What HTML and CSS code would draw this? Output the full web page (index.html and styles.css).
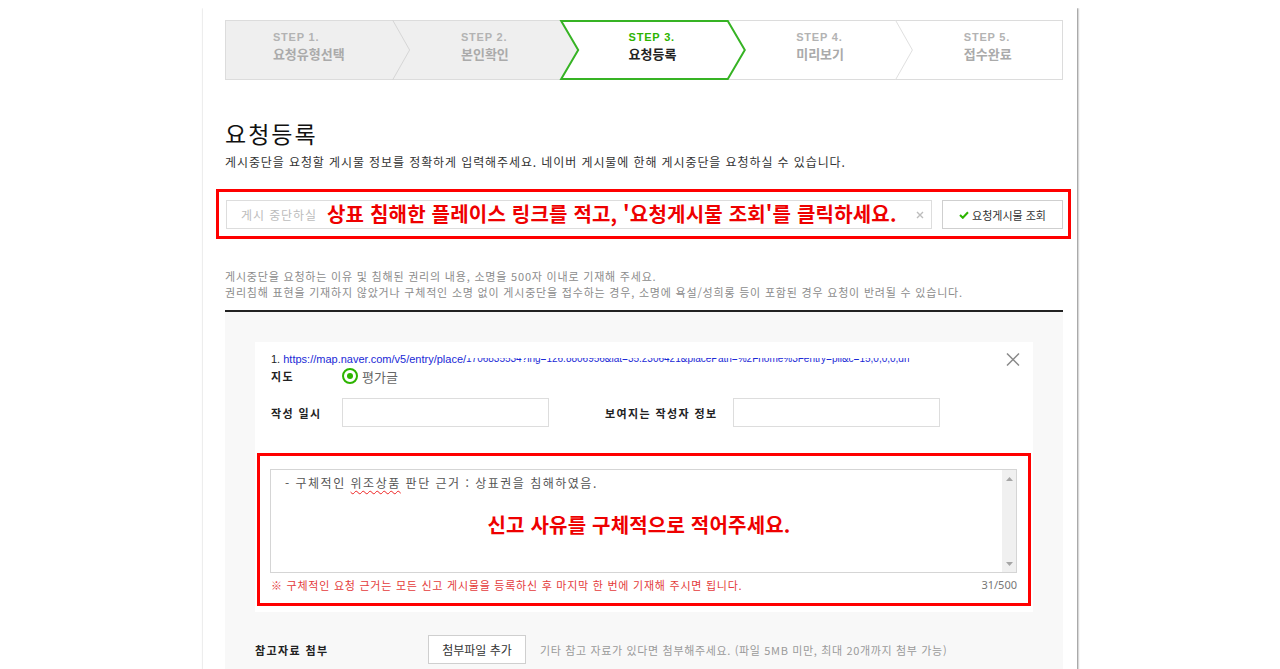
FILE: index.html
```html
<!DOCTYPE html>
<html lang="ko">
<head>
<meta charset="utf-8">
<title>게시중단 요청 - 요청등록</title>
<link rel="stylesheet" href="styles.css">
</head>
<body>
<div class="panel">
  <div class="steps">
    <svg class="steps-bg" viewBox="0 0 838 60" preserveAspectRatio="none" aria-hidden="true">
      <path d="M0 0 H335.2 L352.2 30 L335.2 60 H0 Z" fill="#efefef"/>
      <rect x="0.5" y="0.5" width="837" height="59" fill="none" stroke="#dcdcdc"/>
      <path d="M167.6 0 L184.6 30 L167.6 60" fill="none" stroke="#d6d6d6"/>
      <path d="M670.4 0 L687.4 30 L670.4 60" fill="none" stroke="#e0e0e0"/>
      <path d="M336.2 1 H502.8 L519.8 30 L502.8 59 H336.2 L353.2 30 Z" fill="#fff" stroke="#36b324" stroke-width="2"/>
    </svg>
    <div class="step step-1"><div class="step-text"><span class="step-no">STEP 1.</span><span class="step-name">요청유형선택</span></div></div>
    <div class="step step-2"><div class="step-text"><span class="step-no">STEP 2.</span><span class="step-name">본인확인</span></div></div>
    <div class="step step-3 is-current"><div class="step-text"><span class="step-no">STEP 3.</span><span class="step-name">요청등록</span></div></div>
    <div class="step step-4"><div class="step-text"><span class="step-no">STEP 4.</span><span class="step-name">미리보기</span></div></div>
    <div class="step step-5"><div class="step-text"><span class="step-no">STEP 5.</span><span class="step-name">접수완료</span></div></div>
  </div>

  <h2 class="title">요청등록</h2>
  <p class="desc">게시중단을 요청할 게시물 정보를 정확하게 입력해주세요. 네이버 게시물에 한해 게시중단을 요청하실 수 있습니다.</p>

  <div class="mark mark-search">
    <div class="search">
      <div class="search-input">
        <span class="ph">게시 중단하실</span>
        <svg class="clear" width="8" height="8" viewBox="0 0 8 8" aria-hidden="true"><path d="M1 1 L7 7 M7 1 L1 7" stroke="#bdbdbd" stroke-width="1.4"/></svg>
      </div>
      <button class="search-btn" type="button">
        <svg width="10" height="8" viewBox="0 0 10 8" aria-hidden="true"><path d="M1 4 L3.8 6.8 L9 1.2" fill="none" stroke="#2db400" stroke-width="2"/></svg>
        <span>요청게시물 조회</span>
      </button>
    </div>
    <p class="mark-note note-search">상표 침해한 플레이스 링크를 적고, '요청게시물 조회'를 클릭하세요.</p>
  </div>

  <div class="notice">
    <p>게시중단을 요청하는 이유 및 침해된 권리의 내용, 소명을 500자 이내로 기재해 주세요.</p>
    <p>권리침해 표현을 기재하지 않았거나 구체적인 소명 없이 게시중단을 접수하는 경우, 소명에 욕설/성희롱 등이 포함된 경우 요청이 반려될 수 있습니다.</p>
  </div>

  <div class="form-area">
    <div class="card">
      <div class="url-row">
        <p class="url"><span class="url-no">1.</span> <span class="url-link">https://map.naver.com/v5/entry/place/</span><span class="url-cut">1706835534?lng=126.8806956&amp;lat=35.2306421&amp;placePath=%2Fhome%3Fentry=pll&amp;c=15,0,0,0,dh</span></p>
        <svg class="close" width="14" height="13" viewBox="0 0 14 13" aria-hidden="true"><path d="M1 0.5 L13 12.5 M13 0.5 L1 12.5" stroke="#8a8a8a" stroke-width="1.5"/></svg>
      </div>
      <div class="type-row">
        <span class="lbl">지도</span>
        <span class="radio"></span>
        <span class="radio-text">평가글</span>
      </div>
      <div class="info-row">
        <span class="lbl">작성 일시</span>
        <span class="field"></span>
        <span class="lbl lbl-wide">보여지는 작성자 정보</span>
        <span class="field"></span>
      </div>
      <div class="mark mark-reason">
        <div class="textarea">
          <p class="textarea-text">- 구체적인 <span class="typo">위조상품</span> 판단 근거 : 상표권을 침해하였음.</p>
          <div class="scrollbar">
            <svg width="7" height="4" viewBox="0 0 7 4" aria-hidden="true"><path d="M0 4 L3.5 0 L7 4 Z" fill="#a6a6a6"/></svg>
            <svg width="7" height="4" viewBox="0 0 7 4" aria-hidden="true"><path d="M0 0 L3.5 4 L7 0 Z" fill="#a6a6a6"/></svg>
          </div>
        </div>
        <div class="under">
          <span class="warn">※ 구체적인 요청 근거는 모든 신고 게시물을 등록하신 후 마지막 한 번에 기재해 주시면 됩니다.</span>
          <span class="count">31/500</span>
        </div>
        <p class="mark-note note-reason">신고 사유를 구체적으로 적어주세요.</p>
      </div>
    </div>

    <div class="attach-row">
      <span class="lbl attach-lbl">참고자료 첨부</span>
      <button class="attach-btn" type="button">첨부파일 추가</button>
      <span class="attach-help">기타 참고 자료가 있다면 첨부해주세요. (파일 5MB 미만, 최대 20개까지 첨부 가능)</span>
    </div>
  </div>
</div>
</body>
</html>
```

FILE: styles.css
```css
* {
  box-sizing: border-box;
}

body {
  margin: 8px;
  background: #fff;
  font-family: "Noto Sans CJK KR", "Noto Sans", sans-serif;
  color: #222;
}

p {
  margin: 0;
}

/* page sheet */
.panel {
  width: 874px;
  margin: 0 auto;
  padding: 12px 14px 60px 22px;
  background: #fff;
  box-shadow: 1px 0 2px rgba(0, 0, 0, 0.45), 0 0 2px rgba(0, 0, 0, 0.12);
}

/* step indicator */
.steps {
  display: grid;
  grid-template-columns: repeat(5, 1fr);
  height: 60px;
}

.steps-bg {
  grid-row: 1;
  grid-column: 1 / -1;
  display: block;
  width: 100%;
  height: 60px;
}

.step {
  grid-row: 1;
  display: flex;
  align-items: center;
  justify-content: center;
  padding-bottom: 7px;
}

.step-1 { grid-column: 1; }
.step-2 { grid-column: 2; padding-left: 17px; }
.step-3 { grid-column: 3; padding-left: 17px; }
.step-4 { grid-column: 4; padding-left: 17px; }
.step-5 { grid-column: 5; padding-left: 17px; }

.step-text {
  display: flex;
  flex-direction: column;
}

.step-no {
  font-family: "Liberation Sans", Arial, sans-serif;
  font-weight: 700;
  font-size: 11px;
  line-height: 13px;
  letter-spacing: 0.8px;
  color: #b3b3b3;
}

.step-name {
  font-weight: 700;
  font-size: 13px;
  line-height: 19px;
  color: #aaa;
}

.is-current .step-no {
  color: #2db400;
}

.is-current .step-name {
  color: #222;
}

/* heading */
.title {
  margin: 38px 0 0;
  font-size: 23px;
  font-weight: 400;
  line-height: 30px;
  letter-spacing: 2px;
  color: #111;
}

.desc {
  margin-top: 6px;
  font-size: 12px;
  line-height: 16px;
  letter-spacing: 0.9px;
  color: #333;
}

/* red callout boxes */
.mark {
  position: relative;
  border: 3px solid #f00;
}

.mark-note {
  position: absolute;
  font-weight: 700;
  font-size: 20px;
  line-height: 24px;
  letter-spacing: 0.2px;
  color: #ee0000;
  white-space: nowrap;
}

.mark-search {
  margin: 19px -8px 0 -9px;
  padding: 8px 5px 7px 7px;
}

.note-search {
  left: 108px;
  top: 10px;
}

.search {
  display: flex;
  gap: 10px;
}

.search-input {
  width: 706px;
  height: 29px;
  border: 1px solid #ddd;
  display: flex;
  align-items: center;
  justify-content: space-between;
  padding: 0 7px 0 14px;
  background: #fff;
}

.ph {
  font-size: 12px;
  letter-spacing: 0.9px;
  color: #bcbcbc;
}

.search-btn {
  width: 121px;
  height: 29px;
  border: 1px solid #cfcfcf;
  background: #fff;
  display: flex;
  align-items: center;
  justify-content: center;
  gap: 3px;
  padding: 0;
  font-family: inherit;
  font-size: 11px;
  color: #333;
}

/* guide text */
.notice {
  margin-top: 29px;
  font-size: 11px;
  line-height: 16px;
  letter-spacing: 0.8px;
  color: #8c8c8c;
}

/* form */
.form-area {
  margin-top: 10px;
  border-top: 2px solid #222;
  background: #f8f8f8;
  padding: 30px 30px 40px;
}

.card {
  background: #fff;
  padding: 10px 2px 6px;
}

.url-row {
  display: flex;
  align-items: center;
  justify-content: space-between;
  height: 14px;
  padding: 0 11px 0 14px;
}

.url {
  font-family: "Liberation Sans", Arial, sans-serif;
  font-size: 11px;
  line-height: 14px;
  white-space: nowrap;
  color: #222;
}

.url-link {
  color: #1a29d6;
}

.url-cut {
  display: inline-block;
  vertical-align: top;
  font-size: 10px;
  line-height: 14px;
  color: #1a29d6;
  clip-path: inset(6px 0 0 0);
}

.close {
  display: block;
}

.lbl {
  font-weight: 700;
  font-size: 11px;
  letter-spacing: 1.4px;
  color: #222;
  flex: none;
}

.type-row {
  display: flex;
  align-items: center;
  height: 16px;
  margin-top: 2px;
  padding-left: 14px;
}

.type-row .lbl,
.info-row .lbl {
  width: 71px;
}

.radio {
  width: 16px;
  height: 16px;
  border: 2px solid #2db400;
  border-radius: 50%;
  display: flex;
  align-items: center;
  justify-content: center;
}

.radio::after {
  content: "";
  width: 6px;
  height: 6px;
  border-radius: 50%;
  background: #2db400;
}

.radio-text {
  margin-left: 4px;
  font-size: 13px;
  color: #666;
}

.info-row {
  display: flex;
  align-items: center;
  margin-top: 14px;
  padding-left: 14px;
}

.field {
  width: 207px;
  height: 29px;
  border: 1px solid #ddd;
  background: #fff;
}

.info-row .lbl-wide {
  width: 128px;
  margin-left: 56px;
}

.mark-reason {
  margin-top: 26px;
  padding: 13px 11px 10px 10px;
}

.textarea {
  height: 104px;
  border: 1px solid #d5d5d5;
  display: flex;
  justify-content: space-between;
  background: #fff;
}

.textarea-text {
  padding: 4px 14px;
  font-size: 12px;
  line-height: 18px;
  letter-spacing: 1.5px;
  color: #555;
}

.typo {
  text-decoration: underline wavy #e22;
  text-decoration-thickness: 1px;
  text-underline-offset: 2px;
}

.scrollbar {
  width: 14px;
  background: #f0f0f0;
  display: flex;
  flex-direction: column;
  align-items: center;
  justify-content: space-between;
  padding: 7px 0 6px;
}

.scrollbar svg {
  display: block;
}

.under {
  display: flex;
  justify-content: space-between;
  margin-top: 4px;
  padding: 0 0 0 1px;
  font-size: 11px;
  line-height: 16px;
}

.warn {
  color: #e43b3b;
  letter-spacing: 0.75px;
}

.count {
  color: #777;
  font-family: "Noto Sans", sans-serif;
}

.note-reason {
  left: 0;
  right: 0;
  top: 57px;
  padding-right: 10px;
  text-align: center;
}

/* attachments */
.attach-row {
  display: flex;
  align-items: center;
  margin-top: 23px;
}

.attach-row .attach-lbl {
  width: 173px;
}

.attach-btn {
  width: 98px;
  height: 29px;
  border: 1px solid #cfcfcf;
  background: #fff;
  padding: 0;
  font-family: inherit;
  font-size: 12px;
  color: #333;
}

.attach-help {
  margin-left: 14px;
  font-size: 11px;
  letter-spacing: 0.65px;
  color: #9a9a9a;
}
```
